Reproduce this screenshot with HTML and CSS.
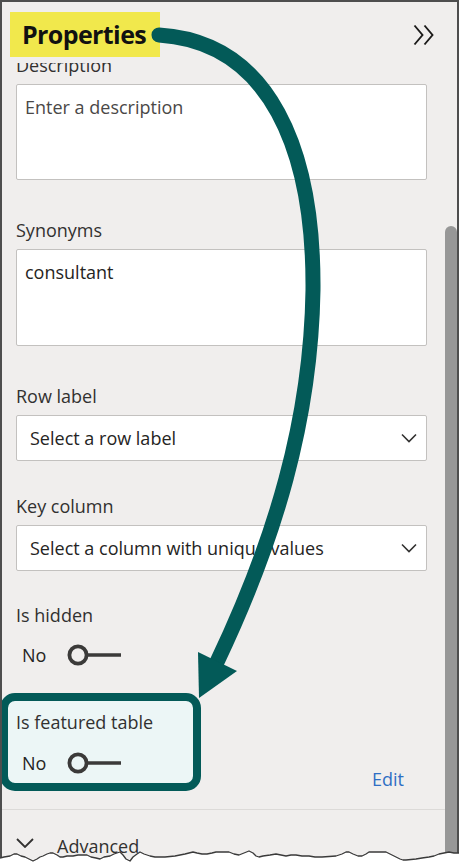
FILE: index.html
```html
<!DOCTYPE html>
<html lang="en">
<head>
<meta charset="utf-8">
<title>Properties</title>
<link rel="stylesheet" href="styles.css">
</head>
<body>
<div class="frame">
  <header class="header">
    <h1 class="title">Properties</h1>
    <span class="collapse" aria-label="Collapse">
      <svg width="22" height="22" viewBox="0 0 22 22"><path d="M1.5 1.5 L9.5 11 L1.5 20.5 M11.5 1.5 L19.5 11 L11.5 20.5" fill="none" stroke="#1b1a19" stroke-width="1.9" stroke-linejoin="miter"/></svg>
    </span>
  </header>
  <div class="body">
    <div class="content">
      <div class="fields">
        <div class="field field-desc">
          <label class="label">Description</label>
          <div class="textarea placeholder">Enter a description</div>
        </div>
        <div class="field field-syn">
          <label class="label">Synonyms</label>
          <div class="textarea tall">consultant</div>
        </div>
        <div class="field field-row">
          <label class="label">Row label</label>
          <div class="select"><span>Select a row label</span>
            <svg class="chev" width="16" height="10" viewBox="0 0 16 10"><polyline points="1,1.5 8,8.5 15,1.5" fill="none" stroke="#323130" stroke-width="1.6"/></svg>
          </div>
        </div>
        <div class="field field-key">
          <label class="label">Key column</label>
          <div class="select"><span>Select a column with unique values</span>
            <svg class="chev" width="16" height="10" viewBox="0 0 16 10"><polyline points="1,1.5 8,8.5 15,1.5" fill="none" stroke="#323130" stroke-width="1.6"/></svg>
          </div>
        </div>
        <div class="field field-hidden">
          <label class="label">Is hidden</label>
          <div class="toggle-row"><span>No</span>
            <svg class="toggle" width="56" height="22" viewBox="0 0 56 22"><circle cx="11" cy="11" r="8.6" fill="none" stroke="#3b3a39" stroke-width="3.8"/><line x1="19" y1="11" x2="54" y2="11" stroke="#3b3a39" stroke-width="3.6"/></svg>
          </div>
        </div>
        <div class="featured-row">
          <div class="featured">
            <label class="label">Is featured table</label>
            <div class="toggle-row"><span>No</span>
              <svg class="toggle" width="56" height="22" viewBox="0 0 56 22"><circle cx="11" cy="11" r="8.6" fill="none" stroke="#3b3a39" stroke-width="3.8"/><line x1="19" y1="11" x2="54" y2="11" stroke="#3b3a39" stroke-width="3.6"/></svg>
            </div>
          </div>
          <a class="edit">Edit</a>
        </div>
      </div>
      <div class="divider"></div>
      <div class="advanced">
        <svg class="adv-chev" width="18" height="10" viewBox="0 0 18 10"><polyline points="1,1 9,9 17,1" fill="none" stroke="#323130" stroke-width="1.8"/></svg>
        <span>Advanced</span>
      </div>
    </div>
    <div class="scrollbar"><div class="thumb"></div></div>
  </div>
  <svg class="arrow" width="459" height="867" viewBox="0 0 459 867">
    <path d="M159 35 C270 42 314 150 313 290 C311 420 275 540 217 662" fill="none" stroke="#035a58" stroke-width="15" stroke-linecap="round"/>
    <polygon points="198,652 237,671 199,698" fill="#035a58"/>
  </svg>
  <svg class="torn" width="459" height="22" viewBox="0 846 459 22">
    <path d="M0 859 L4 858 L10 857 L14 855 L17 855 L21 857 L25 858 L29 860 L33 862 L37 860 L40 858 L43 857 L47 855 L50 854 L53 854 L57 856 L60 858 L63 858 L67 857 L73 857 L78 856 L87 856 L91 858 L96 859 L100 860 L104 858 L110 857 L114 855 L117 854 L120 853 L123 856 L126 860 L130 862 L133 858 L137 855 L140 853 L144 855 L150 857 L155 858 L165 858 L175 857 L180 856 L185 855 L189 854 L193 853 L197 854 L202 855 L207 855 L212 854 L216 853 L229 853 L234 855 L239 856 L244 854 L249 852 L253 854 L256 857 L259 858 L263 857 L270 856 L276 855 L281 856 L286 857 L291 856 L296 856 L302 857 L309 857 L315 858 L322 858 L336 857 L342 855 L346 853 L349 853 L353 855 L358 857 L362 857 L366 855 L369 853 L386 853 L390 855 L396 858 L400 860 L403 861 L406 861 L416 860 L422 859 L429 858 L434 857 L439 855 L444 854 L449 853 L454 854 L459 854 L459 868 L0 868 Z" fill="#ffffff"/>
    <polyline points="0,859 4,858 10,857 14,855 17,855 21,857 25,858 29,860 33,862 37,860 40,858 43,857 47,855 50,854 53,854 57,856 60,858 63,858 67,857 73,857 78,856 87,856 91,858 96,859 100,860 104,858 110,857 114,855 117,854 120,853 123,856 126,860 130,862 133,858 137,855 140,853 144,855 150,857 155,858 165,858 175,857 180,856 185,855 189,854 193,853 197,854 202,855 207,855 212,854 216,853 229,853 234,855 239,856 244,854 249,852 253,854 256,857 259,858 263,857 270,856 276,855 281,856 286,857 291,856 296,856 302,857 309,857 315,858 322,858 336,857 342,855 346,853 349,853 353,855 358,857 362,857 366,855 369,853 386,853 390,855 396,858 400,860 403,861 406,861 416,860 422,859 429,858 434,857 439,855 444,854 449,853 454,854 459,854" fill="none" stroke="#3a3a3a" stroke-width="1.3" stroke-linejoin="round"/>
  </svg>
</div>
</body>
</html>
```
FILE: styles.css
```css
* { box-sizing: border-box; }
html, body { margin: 0; padding: 0; }
body {
  width: 459px;
  height: 867px;
  overflow: hidden;
  background: #ffffff;
  font-family: "Open Sans", "Noto Sans", sans-serif;
  color: #323130;
}
.frame {
  position: relative;
  width: 459px;
  height: 867px;
  padding: 2px 2px 0 2px;
  background: #f0eeed;
  box-shadow: inset 2px 2px 0 #4e4e4e, inset -2px 0 0 #4e4e4e;
  display: flex;
  flex-direction: column;
  overflow: hidden;
}
.header {
  height: 61px;
  flex: none;
  display: flex;
  align-items: flex-start;
  padding: 10px 0 0 8px;
}
.title {
  margin: 0;
  width: 150px;
  height: 45px;
  padding-left: 12px;
  background: #f1e84c;
  font-size: 25px;
  line-height: 45px;
  font-weight: 700;
  letter-spacing: -0.6px;
  color: #111111;
  white-space: nowrap;
}
.collapse {
  margin-left: auto;
  margin-right: 22px;
  margin-top: 12px;
  width: 22px;
  height: 22px;
  display: block;
}
.collapse svg { display: block; }
.body {
  flex: 1;
  display: flex;
  min-height: 0;
  overflow: hidden;
}
.content {
  flex: 1;
  overflow: hidden;
  display: flow-root;
}
.fields {
  padding: 0 18px 0 14px;
}
.label {
  display: block;
  font-size: 18px;
  line-height: 24px;
  height: 24px;
  margin-bottom: 7px;
  color: #323130;
  white-space: nowrap;
}
.field-desc { margin-top: -10px; }
.field-syn { margin-top: 38px; }
.field-row { margin-top: 38px; }
.field-key { margin-top: 33px; }
.field-hidden { margin-top: 32px; }
.textarea {
  height: 96px;
  background: #ffffff;
  border: 1px solid #c3c1bf;
  border-radius: 2px;
  padding: 10px 8px 0 8px;
  font-size: 18px;
  line-height: 24px;
  color: #252423;
}
.textarea.tall { height: 97px; }
.placeholder { color: #4a4847; }
.select {
  height: 46px;
  background: #ffffff;
  border: 1px solid #c3c1bf;
  border-radius: 2px;
  padding: 0 9px 0 13px;
  display: flex;
  align-items: center;
  justify-content: space-between;
  font-size: 18px;
  line-height: 24px;
  color: #252423;
  white-space: nowrap;
}
.chev { display: block; flex: none; }
.toggle-row {
  height: 40px;
  margin-top: 8px;
  padding-left: 6px;
  display: flex;
  align-items: center;
  font-size: 18px;
  line-height: 24px;
  color: #252423;
}
.toggle { display: block; margin-left: 21px; }
.featured-row {
  margin-top: 18px;
  display: flex;
  align-items: flex-end;
}
.featured {
  margin-left: -16px;
  width: 201px;
  height: 98px;
  border: 8px solid #035a58;
  border-radius: 15px;
  background: #ecf6f6;
  padding: 9px 8px 0 8px;
}
.featured .label { margin-bottom: 0; }
.featured .toggle-row { margin-top: 9px; }
.edit {
  margin-left: auto;
  margin-right: 23px;
  font-size: 18px;
  line-height: 24px;
  color: #2f6ec4;
  text-decoration: none;
}
.divider {
  margin-top: 18px;
  height: 1px;
  background: #dcdad8;
}
.advanced {
  padding: 24px 0 0 14px;
  display: flex;
  align-items: flex-start;
  font-size: 18px;
  line-height: 24px;
  color: #323130;
}
.adv-chev { display: block; margin-top: 4px; margin-right: 23px; }
.scrollbar {
  width: 12px;
  flex: none;
  display: flex;
  flex-direction: column;
}
.thumb {
  margin-top: 163px;
  flex: 1;
  background: #979797;
  border-radius: 6px 6px 0 0;
}
.arrow {
  position: absolute;
  left: 0;
  top: 0;
  pointer-events: none;
}
.torn {
  position: absolute;
  left: 0;
  bottom: 0;
  pointer-events: none;
}
```
